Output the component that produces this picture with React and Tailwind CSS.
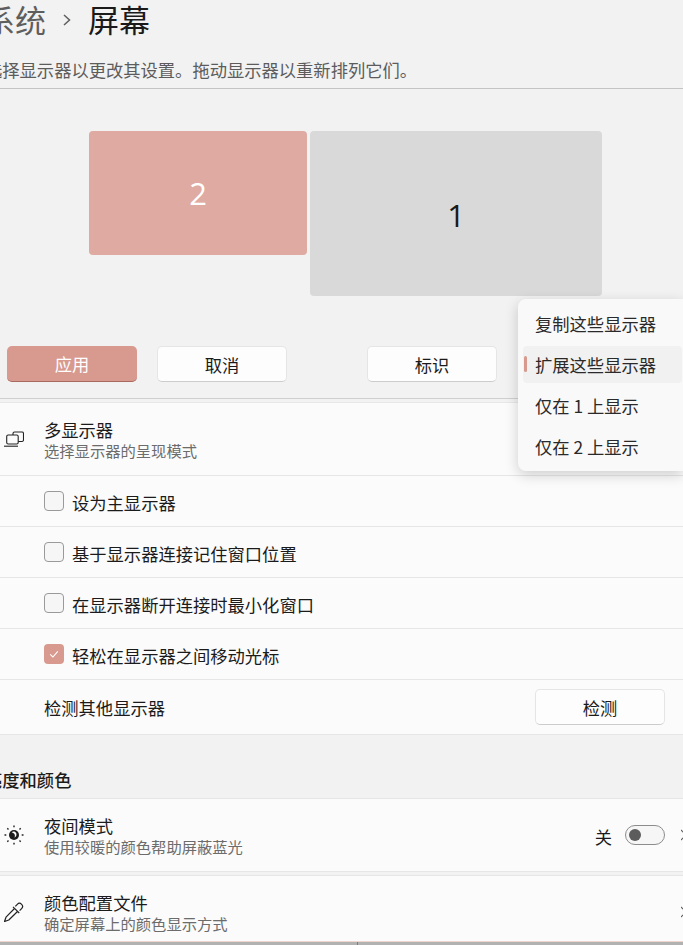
import React from "react";

function Check({ checked, label }) {
  return (
    <div className="flex h-[51px] items-center border-b border-[#e6e6e6] pl-[44px]">
      {checked ? (
        <span className="flex h-5 w-5 items-center justify-center rounded-[4px] bg-[#d8998e]">
          <svg width="12" height="12" viewBox="0 0 12 12" fill="none" stroke="#fff" strokeWidth="1.1"><path d="M2.2 6.4 4.9 9 9.8 3.4" /></svg>
        </span>
      ) : (
        <span className="h-5 w-5 rounded-[4px] border border-[#9a9a9a] bg-[#f6f6f6]" />
      )}
      <span className="ml-2 pt-[3px] text-[17.3px] leading-6 text-[#1b1b1b]">{label}</span>
    </div>
  );
}

function IconCell({ children }) {
  return <div className="flex w-[44px] shrink-0 items-center justify-start pl-[4px]">{children}</div>;
}

function TwoLine({ title, sub }) {
  return (
    <div className="flex flex-col pt-[2px]">
      <span className="text-[17.3px] leading-[20px] text-[#1b1b1b]">{title}</span>
      <span className="text-[15.3px] leading-[20px] text-[#6c6c6c]">{sub}</span>
    </div>
  );
}

function Btn({ children, className }) {
  return (
    <button className={"flex h-9 w-[130px] items-center justify-center rounded-[5px] border border-[#e5e5e5] border-b-[#cccccc] bg-[#fdfdfd] pt-[2px] text-[17.3px] text-[#1b1b1b] " + className}>
      {children}
    </button>
  );
}

function EdgeChevron({ className }) {
  return (
    <svg className={"shrink-0 " + className} width="2" height="12" viewBox="0 0 2 12" fill="none" stroke="#5e5e5e" strokeWidth="1.2"><path d="M0 1 5 6l-5 5" /></svg>
  );
}

export default function App() {
  return (
    <div className="relative h-[945px] w-[683px] overflow-hidden bg-[#f2f2f2]" style={{ fontFamily: '"Noto Sans CJK SC", "Noto Sans", sans-serif' }}>
      <header className="flex h-[37px] items-center">
        <span className="-ml-[16px] text-[31px] leading-[38px] text-[#5e5e5e]">系统</span>
        <svg className="ml-[16px] mt-[3px]" width="10" height="14" viewBox="0 0 10 14" fill="none" stroke="#5e5e5e" strokeWidth="1.5"><path d="M2 2l5.500 5-5.500 5" /></svg>
        <span className="ml-[16px] text-[31px] leading-[38px] text-[#1a1a1a]">屏幕</span>
      </header>
      <p className="-ml-[15px] mt-[21px] flex h-[24px] items-center whitespace-nowrap text-[17.3px] text-[#5c5c5c]">选择显示器以更改其设置。拖动显示器以重新排列它们。</p>
      <div className="mt-[6px] h-px bg-[#c4c4c4]" />

      <section className="h-[309px] pt-[42px]">
        <div className="flex items-start gap-[3px] pl-[89px]">
          <div className="flex h-[124px] w-[218px] items-center justify-center rounded-[4px] bg-[#dfaaa1] font-['Open_Sans'] text-[31px] text-white">2</div>
          <div className="flex h-[165px] w-[292px] items-center justify-center rounded-[4px] bg-[#d9d9d9] pt-[4px] font-['Open_Sans'] text-[31px] text-[#1a1a1a]">1</div>
        </div>
        <div className="mt-[50px] flex pl-[7px]">
          <button className="flex h-9 w-[130px] items-center justify-center rounded-[5px] border-b border-b-[#a8695f] bg-[#d8998e] pt-[1px] text-[17.3px] text-white">应用</button>
          <Btn className="ml-[20px]">取消</Btn>
          <Btn className="ml-[80px]">标识</Btn>
        </div>
      </section>
      <div className="h-px bg-[#cfcfcf]" />

      <div className="mt-[3px] border-t border-[#e8e8e8] bg-[#fbfbfb]">
        <div className="flex h-[73px] items-center border-b border-[#e6e6e6]">
          <IconCell>
            <svg width="20" height="16" viewBox="0 0 20 16" fill="none" stroke="#222" strokeWidth="1.1"><rect x="9" y="1" width="10.500" height="9.500" rx="1.500" /><rect x="2.700" y="4" width="11.500" height="9" rx="1.500" fill="#fbfbfb" /><path d="M0 15.200h14" /></svg>
          </IconCell>
          <TwoLine title="多显示器" sub="选择显示器的呈现模式" />
        </div>
        <Check label="设为主显示器" />
        <Check label="基于显示器连接记住窗口位置" />
        <Check label="在显示器断开连接时最小化窗口" />
        <Check checked label="轻松在显示器之间移动光标" />
        <div className="flex h-[55px] items-center justify-between border-b border-[#e6e6e6] pl-[44px] pr-[18px]">
          <span className="pt-[2px] text-[17.3px] text-[#1b1b1b]">检测其他显示器</span>
          <Btn>检测</Btn>
        </div>
      </div>

      <h2 className="-ml-[15px] flex h-[63px] items-end pb-[6px] text-[17.3px] font-medium leading-6 text-[#1b1b1b]">亮度和颜色</h2>

      <div className="border-y border-[#e6e6e6] bg-[#fbfbfb]">
        <div className="flex h-[72px] items-center">
          <IconCell>
            <svg width="20" height="20" viewBox="0 0 20 20" fill="none">
              <circle cx="10" cy="10" r="5" fill="#1c1c1c" />
              <path d="M7.600 11.200c2.400.6 4.500-1.200 4.300-4.300 1.400.8 1.800 2.800.9 4.200-1.100 1.600-3.600 1.800-5.200.1z" fill="#fbfbfb" transform="rotate(-70 10 10)" />
              <path d="M10 .5v1.800M10 17.700v1.800M.5 10h1.800M17.700 10h1.800M3.300 3.300l1.200 1.200M15.500 15.500l1.200 1.200M3.300 16.700l1.200-1.200M15.500 4.500l1.200-1.200" stroke="#222" strokeWidth="1.400" />
            </svg>
          </IconCell>
          <TwoLine title="夜间模式" sub="使用较暖的颜色帮助屏蔽蓝光" />
          <span className="ml-auto pt-[3px] text-[17.3px] text-[#1b1b1b]">关</span>
          <span className="ml-[13px] flex h-5 w-10 items-center rounded-full border border-[#8c8c8c] bg-[#f6f6f6] pl-[3px]">
            <span className="h-3 w-3 rounded-full bg-[#5c5c5c]" />
          </span>
          <EdgeChevron className="ml-[16px]" />
        </div>
      </div>
      <div className="mt-[3px] flex h-[66px] items-center border-t border-[#e6e6e6] bg-[#fbfbfb] pt-[7px]">
        <IconCell>
          <svg width="20" height="20" viewBox="0 0 20 20" fill="none" stroke="#222" strokeWidth="1.200" strokeLinejoin="round">
            <path d="M10.500 6.500 2 15.200.5 19.500l4.300-1.500 8.700-8.500" />
            <path d="M9 4.800l6.200 6.200" />
            <path d="M11.300 4.300l2-2a3 3 0 0 1 4.300 4.300l-2 2" />
          </svg>
        </IconCell>
        <TwoLine title="颜色配置文件" sub="确定屏幕上的颜色显示方式" />
        <EdgeChevron className="ml-auto" />
      </div>
      <div className="h-px bg-[#efd6d0]" />
      <div className="flex h-[3px] bg-[#b2b2b2]">
        <div className="ml-[357px] w-px bg-[#7e7e7e]" />
      </div>

      <div className="absolute left-[518px] top-[299px] flex h-[172px] w-[165px] flex-col rounded-l-[8px] bg-[#f9f9f9] py-[4px] shadow-[0_4px_14px_rgba(0,0,0,0.18)]">
        {[["复制这些显示器", false], ["扩展这些显示器", true], ["仅在 1 上显示", false], ["仅在 2 上显示", false]].map(([t, sel]) => (
          <div key={t} className="relative ml-[5px] flex h-[41px] items-center pl-[12px] text-[17.3px] text-[#2a2a2a]">
            {sel && <span className="absolute inset-y-[2px] left-0 right-px rounded-[4px] bg-[#f1f1f1]" />}
            {sel && <span className="absolute left-px top-[12px] h-4 w-[3px] rounded-full bg-[#d8998e]" />}
            <span className="relative">{t}</span>
          </div>
        ))}
      </div>
    </div>
  );
}
